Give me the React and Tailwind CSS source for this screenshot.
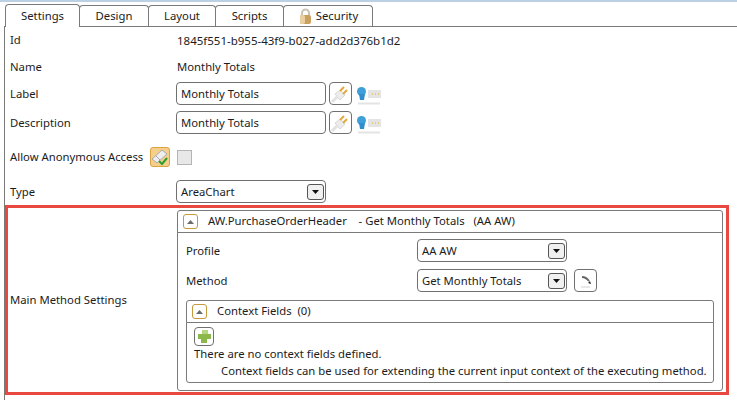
import React from 'react';

const PlugIcon = () => (
  <svg width="21" height="21" viewBox="0 0 21 21" className="blur-[0.5px]">
    <path d="M2 19 L7 14" stroke="#e2e2e2" strokeWidth="3" />
    <path d="M5 11 L10 7 L15 12 L10 17 Z" fill="#ececec" stroke="#d8d8d8" />
    <path d="M10 8 L14 4" stroke="#e3a83a" strokeWidth="2" />
    <path d="M13 11 L17 7" stroke="#e3a83a" strokeWidth="2" />
  </svg>
);

const HintIcon = () => (
  <svg width="26" height="24" viewBox="0 0 26 24" className="blur-[0.5px]">
    <circle cx="5.5" cy="9.5" r="4.5" fill="#3f9fd8" />
    <path d="M3 12 h6 l-1 6 h-4 Z" fill="#2f8ecb" />
    <rect x="12" y="8" width="13" height="8" fill="#e4e4e4" />
    <path d="M16 12 h1 M19 12 h1 M22 12 h1" stroke="#e8c060" strokeWidth="1.5" />
    <rect x="2" y="20.5" width="22" height="2" fill="#e4e4e4" />
  </svg>
);

const LockIcon = () => (
  <svg width="15" height="17" viewBox="0 0 15 17" className="blur-[0.5px]">
    <path d="M4 8 V5 a3.5 3.5 0 0 1 7 0 V8" fill="none" stroke="#c8c4b8" strokeWidth="2" />
    <rect x="2" y="7" width="11" height="9" rx="2" fill="#c9a060" />
    <rect x="2" y="7" width="5" height="9" rx="2" fill="#ead0a0" />
  </svg>
);

const AnonymousIcon = () => (
  <svg width="18" height="18" viewBox="0 0 18 18" className="blur-[0.2px]">
    <path d="M1 11 L11 2 L16 6 L6 15 Z" fill="#eeeeee" stroke="#a8a8a8" />
    <path d="M5 8 L9 12" stroke="#a8a8a8" />
    <path d="M8 13 L11 16 L16 10" fill="none" stroke="#2e9e2e" strokeWidth="2" />
  </svg>
);

const PlusIcon = () => (
  <svg width="15" height="15" viewBox="0 0 15 15" className="blur-[0.6px]">
    <path d="M5 1 h6 v4 h3 v5 h-4 v4 h-6 v-4 h-3 v-5 h4 Z" fill="#8cb84a" />
    <path d="M5 1 h6 v4 h-6 Z" fill="#b6d680" />
  </svg>
);

const GoIcon = () => (
  <svg width="17" height="17" viewBox="0 0 17 17" className="blur-[0.2px]">
    <path d="M5 5 Q9 5 12 9" fill="none" stroke="#666666" strokeWidth="2" />
    <path d="M13 9 l1 3 -3 -1 Z" fill="#222222" />
    <path d="M4 15 h9" stroke="#e8e8e8" strokeWidth="2" />
  </svg>
);

const Arrow = ({ up }) => (
  <svg width="7" height="4" viewBox="0 0 7 4">
    <path d={up ? 'M0 4 L3.5 0 L7 4 Z' : 'M0 0 L7 0 L3.5 4 Z'} fill={up ? '#6b6b6b' : '#111111'} />
  </svg>
);

const tabs = [
  { name: 'Design', width: 'w-[70px]' },
  { name: 'Layout', width: 'w-[68px]' },
  { name: 'Scripts', width: 'w-[69px]' },
];

const TabBar = () => (
  <div className="flex h-[24px] items-end pl-[5px]">
    <div className="relative z-10 -mb-px flex h-[23px] w-[75px] items-center justify-center rounded-t-[4px] border border-b-0 border-[#7a7a7a] bg-white">
      Settings
    </div>
    {tabs.map((tab) => (
      <div
        key={tab.name}
        className={`-ml-px flex h-[21px] ${tab.width} items-center justify-center rounded-t-[4px] border border-b-0 border-[#7a7a7a] bg-white`}
      >
        {tab.name}
      </div>
    ))}
    <div className="-ml-px flex h-[21px] w-[90px] items-center justify-center gap-[3px] rounded-t-[4px] border border-b-0 border-[#7a7a7a] bg-white">
      <LockIcon />
      Security
    </div>
  </div>
);

const Row = ({ label, className, children }) => (
  <div className={`grid grid-cols-[166px_1fr] items-center pl-[5px] ${className}`}>
    <div>{label}</div>
    <div className="flex items-center">{children}</div>
  </div>
);

const IconButton = ({ children, className }) => (
  <div className={`flex shrink-0 items-center justify-center rounded-[4px] border border-[#707070] bg-white ${className}`}>
    {children}
  </div>
);

const TextField = ({ value }) => (
  <>
    <div className="flex h-[23px] w-[150px] items-center rounded-[4px] border border-[#707070] pl-[4px] pt-[2px]">{value}</div>
    <IconButton className="ml-[3px] h-[23px] w-[23px]"><PlugIcon /></IconButton>
    <div className="ml-[4px] flex h-[23px] items-center"><HintIcon /></div>
  </>
);

const ComboBox = ({ value }) => (
  <div className="flex h-[23px] w-[150px] items-center justify-between rounded-[4px] border border-[#707070] pl-[4px] pr-px">
    <span className="pt-[2px]">{value}</span>
    <div className="flex h-[16px] w-[17px] items-center justify-center rounded-[3px] border border-[#555555] bg-[#f0f0f0]">
      <Arrow />
    </div>
  </div>
);

const ExpanderHeader = ({ children }) => (
  <div className="flex h-[23px] items-center rounded-t-[3px] border border-[#7a7a7a] pl-[5px]">
    <div className="flex h-[15px] w-[15px] items-center justify-center rounded-[3px] border border-[#c59a3c] bg-white">
      <Arrow up />
    </div>
    <div className="ml-[10px] whitespace-pre">{children}</div>
  </div>
);

export default function App() {
  return (
    <div
      className="h-[400px] w-[737px] overflow-hidden bg-white text-[11.3px] text-[#1c1c1c]"
      style={{ fontFamily: '"Noto Sans", sans-serif' }}
    >
      <div className="h-[2px] bg-[#bcd0e4]" />
      <TabBar />
      <div className="ml-[4px] h-[374px] border-l border-t border-[#7a7a7a]">
        <Row label="Id" className="h-[27px]"><span className="pl-px text-[11.5px]">1845f551-b955-43f9-b027-add2d376b1d2</span></Row>
        <Row label="Name" className="h-[26px]"><span className="pl-px">Monthly Totals</span></Row>
        <Row label={<span className="block pt-[2px]">Label</span>} className="mt-[2px] h-[23px]"><TextField value="Monthly Totals" /></Row>
        <Row label={<span className="block pt-[2px]">Description</span>} className="mt-[6px] h-[23px]"><TextField value="Monthly Totals" /></Row>

        <div className="mt-[13px] flex h-[20px] items-center pl-[5px]">
          <span className="w-[140px]">Allow Anonymous Access</span>
          <div className="flex h-[20px] w-[20px] items-center justify-center rounded-[3px] border border-[#d9a441] bg-[#f6cf8d]">
            <AnonymousIcon />
          </div>
          <div className="ml-[7px] h-[15px] w-[15px] border border-[#b5b5b5] bg-[#e8e8e8]" />
        </div>

        <Row label={<span className="block pt-[2px]">Type</span>} className="mt-[13px] h-[23px]"><ComboBox value="AreaChart" /></Row>

        <div className="mt-[2px] grid h-[190px] w-[724px] grid-cols-[169px_1fr] items-center border-[3px] border-[#e8483f] pb-px pr-[3px] pt-[2px]">
          <div className="pl-[2px]">Main Method Settings</div>
          <div className="flex h-full flex-col">
            <ExpanderHeader>AW.PurchaseOrderHeader    - Get Monthly Totals   (AA AW)</ExpanderHeader>
            <div className="-mt-px flex-1 rounded-b-[3px] border border-[#7a7a7a] px-[8px] pt-[6px]">
              <div className="grid h-[23px] grid-cols-[231px_1fr] items-center">
                <span className="pt-[2px]">Profile</span>
                <ComboBox value="AA AW" />
              </div>
              <div className="mt-[7px] grid h-[23px] grid-cols-[231px_1fr] items-center">
                <span className="pt-[2px]">Method</span>
                <div className="flex">
                  <ComboBox value="Get Monthly Totals" />
                  <IconButton className="ml-[7px] h-[23px] w-[23px]"><GoIcon /></IconButton>
                </div>
              </div>
              <div className="mt-[8px]">
                <ExpanderHeader>Context Fields  (0)</ExpanderHeader>
                <div className="-mt-px h-[61px] rounded-b-[3px] border border-[#7a7a7a] pl-[7px] pt-[4px]">
                  <IconButton className="h-[19px] w-[20px]"><PlusIcon /></IconButton>
                  <div className="leading-[16px]">There are no context fields defined.</div>
                  <div className="mt-px whitespace-nowrap pl-[27px] leading-[16px]">Context fields can be used for extending the current input context of the executing method.</div>
                </div>
              </div>
            </div>
          </div>
        </div>
      </div>
    </div>
  );
}
